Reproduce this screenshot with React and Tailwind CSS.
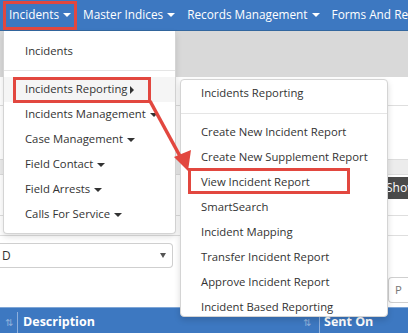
import React from 'react';

const Caret = () => (
  <span className="ml-[4px] inline-block h-0 w-0 border-x-[4px] border-t-[4px] border-x-transparent border-t-current align-middle" />
);

const RightCaret = () => (
  <span className="ml-[3px] inline-block h-0 w-0 border-y-[4px] border-l-[4px] border-y-transparent border-l-current align-middle" />
);

const navItems = ['Incidents', 'Master Indices', 'Records Management', 'Forms And Reports'];

const mainMenu = ['Incidents Management', 'Case Management', 'Field Contact', 'Field Arrests', 'Calls For Service'];

const subMenu = [
  'Create New Incident Report',
  'Create New Supplement Report',
  'View Incident Report',
  'SmartSearch',
  'Incident Mapping',
  'Transfer Incident Report',
  'Approve Incident Report',
  'Incident Based Reporting',
];

const SortIcon = () => <span className="text-[10px] font-normal text-[#8fb0dc]">⇅</span>;

export default function App() {
  return (
    <div className="relative h-[333px] w-[408px] overflow-hidden bg-white font-['Open_Sans',sans-serif] text-[11.3px] text-[#333]">
      {/* top nav */}
      <div className="flex h-[31px] items-center whitespace-nowrap border-b border-[#33679f] bg-[#3d78c1] pl-[3px] text-white">
        {navItems.map((n) => (
          <div key={n} className="flex items-center px-[6px] text-[11.8px]">
            {n}
            <Caret />
          </div>
        ))}
      </div>

      {/* page behind the menus */}
      <div className="h-[46px] bg-[#d9d9d9]" />
      <div className="h-[29px] border-b border-[#dedede]" />
      <div className="h-[53px]" />
      <div className="h-[16px] border-y border-[#dcdcdc] bg-[#ececec]" />
      <div className="flex h-[26px] items-center justify-end">
        <div className="flex h-[22px] w-[24px] items-center overflow-hidden rounded-l-[3px] bg-[#4a4a4a] pl-[2px] text-[12px] text-white">Show</div>
      </div>
      <div className="h-[15px] border-b border-[#dedede]" />
      <div className="h-[20px] border-b border-[#dedede]" />
      <div className="flex h-[32px] items-end">
        <div className="flex h-[25px] w-[173px] items-center justify-between rounded-r-[4px] border border-l-0 border-[#cfcfcf] pl-[2px] pr-[6px] text-[12px]">
          <span>D</span>
          <span className="h-0 w-0 border-x-[3px] border-t-[5px] border-x-transparent border-t-[#555]" />
        </div>
      </div>
      <div className="flex h-[39px] items-end justify-end pb-[4px]">
        <div className="flex h-[26px] w-[20px] items-center rounded-l-[4px] border border-r-0 border-[#cfcfcf] pl-[6px] text-[#777]">P</div>
      </div>
      <div className="flex h-[26px] items-center border-t border-[#7fa6d6] bg-[#3d78c1] pt-[4px] text-[12.5px] font-bold text-white">
        <div className="flex w-[17px] justify-center"><SortIcon /></div>
        <div className="h-full w-px bg-[#8fb0dc]" />
        <div className="flex-1 pl-[5px]">Description</div>
        <SortIcon />
        <div className="ml-[8px] h-full w-px bg-[#8fb0dc]" />
        <div className="w-[88px] pl-[4px]">Sent On</div>
      </div>

      {/* first dropdown */}
      <div className="absolute left-[3px] top-[31px] w-[173px] rounded-b-[4px] border border-t-0 border-[#d4d4d4] bg-white pb-[6px] pt-[8px] shadow-[0_3px_6px_rgba(0,0,0,0.12)]">
        <div className="flex h-[25px] items-center pl-[21px]">Incidents</div>
        <div className="flex h-[13px] items-center"><div className="h-px w-full bg-[#e5e5e5]" /></div>
        <div className="flex h-[25px] items-center bg-[#f5f5f5] pl-[21px]">Incidents Reporting<RightCaret /></div>
        {mainMenu.map((m) => (
          <div key={m} className="flex h-[25px] items-center pl-[21px]">{m}<Caret /></div>
        ))}
      </div>

      {/* sub dropdown */}
      <div className="absolute left-[180px] top-[79px] h-[238px] w-[208px] overflow-hidden rounded-[4px] border border-[#d4d4d4] bg-white pt-px shadow-[0_3px_6px_rgba(0,0,0,0.15)]">
        <div className="flex h-[25px] items-center pl-[20px]">Incidents Reporting</div>
        <div className="flex h-[14px] items-center"><div className="h-px w-full bg-[#e5e5e5]" /></div>
        {subMenu.map((s) => (
          <div key={s} className="flex h-[25px] items-center pl-[20px]">{s}</div>
        ))}
      </div>

      {/* annotations */}
      <div className="absolute left-[3px] top-[1px] h-[29px] w-[74px] border-[3px] border-[#e2473f]" />
      <div className="absolute left-[13px] top-[77px] h-[26px] w-[138px] border-[3px] border-[#e2473f]" />
      <div className="absolute left-[188px] top-[168px] h-[26px] w-[162px] border-[3px] border-[#e2473f]" />
      <svg className="pointer-events-none absolute left-0 top-0" width="408" height="333">
        <line x1="150" y1="101" x2="181" y2="158" stroke="#e2473f" strokeWidth="3.5" />
        <polygon points="174,157 191,150 188,171" fill="#e2473f" />
      </svg>
    </div>
  );
}
